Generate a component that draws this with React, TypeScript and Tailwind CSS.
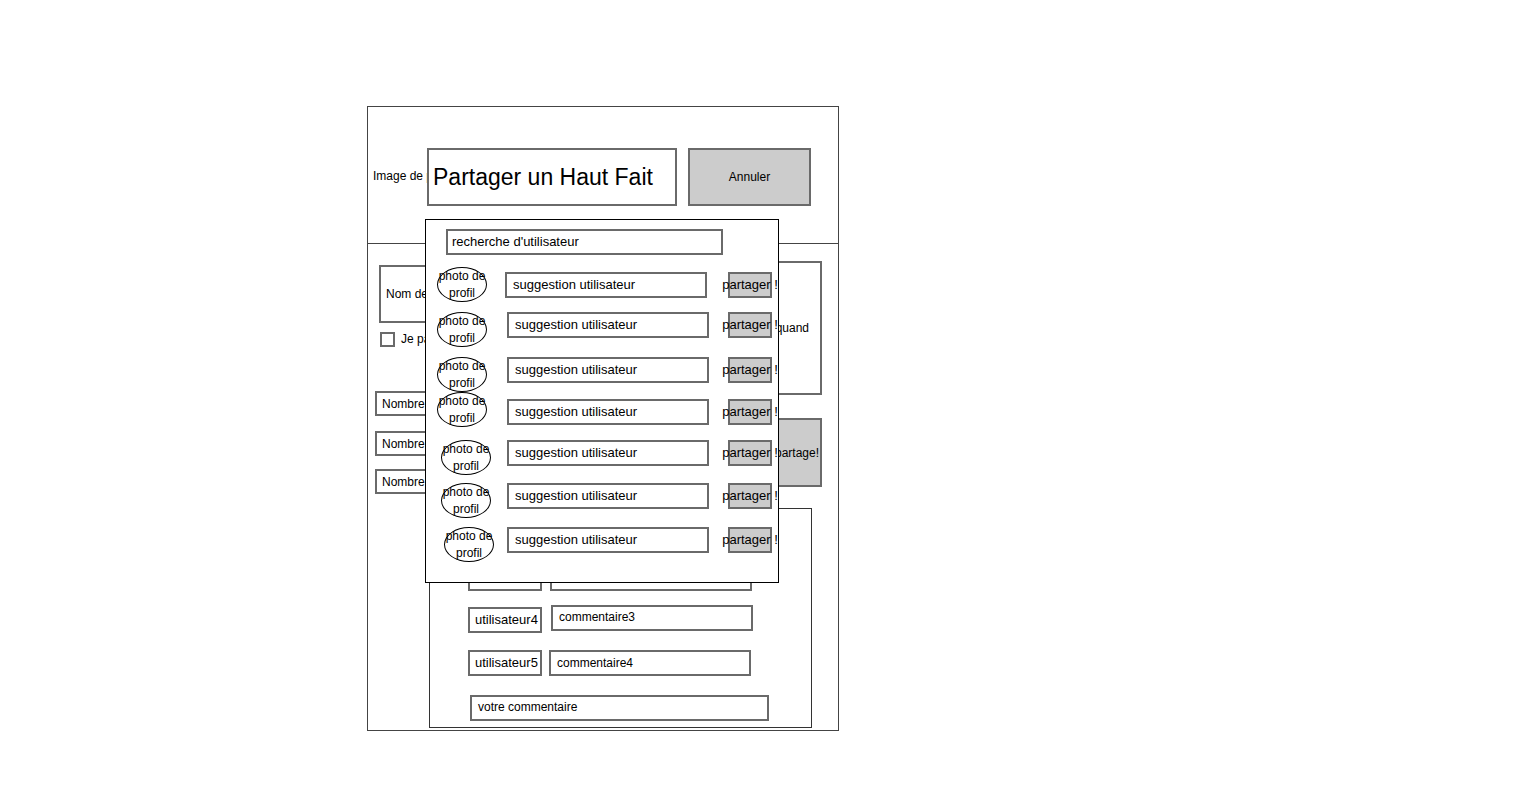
import React from "react";

const rows = [
  { gap: "mt-[12px]", c: "ml-[11px] mt-0", b: "ml-[18px] mt-[5px]", btn: "ml-[21px] mt-[5px]" },
  { gap: "mt-[10px]", c: "ml-[11px] mt-0", b: "ml-[20px] mt-0", btn: "ml-[19px] mt-0" },
  { gap: "mt-[10px]", c: "ml-[11px] mt-0", b: "ml-[20px] mt-0", btn: "ml-[19px] mt-0" },
  { gap: "mt-0", c: "ml-[11px] mt-0", b: "ml-[20px] mt-[7px]", btn: "ml-[19px] mt-[7px]" },
  { gap: "mt-[13px]", c: "ml-[15px] mt-0", b: "ml-[16px] mt-0", btn: "ml-[19px] mt-0" },
  { gap: "mt-[8px]", c: "ml-[15px] mt-0", b: "ml-[16px] mt-0", btn: "ml-[19px] mt-0" },
  { gap: "mt-[9px]", c: "ml-[18px] mt-0", b: "ml-[13px] mt-0", btn: "ml-[19px] mt-0" },
];

const box = "border-2 border-[#6a6a6a] bg-white flex items-center";

export default function App() {
  return (
    <div
      className="relative w-[1522px] h-[809px] bg-white overflow-hidden pt-[106px] pl-[367px] text-black"
      style={{ fontFamily: '"Liberation Sans", Arial, sans-serif' }}
    >
      {/* main frame */}
      <div className="w-[472px] h-[625px] border border-[#444] flex flex-col">
        {/* header */}
        <div className="h-[137px] shrink-0 border-b border-[#444] flex items-start pt-[41px]">
          <div className="w-[59px] h-[58px] pl-[5px] flex items-center overflow-hidden whitespace-nowrap text-[12px] -mt-[1px]">
            Image de profil
          </div>
          <div className={`${box} w-[250px] h-[58px] pl-[4px] text-[23px]`}>Partager un Haut Fait</div>
          <div className="ml-[11px] w-[123px] h-[58px] bg-[#cccccc] border-2 border-[#6a6a6a] flex items-center justify-center text-[12px]">
            Annuler
          </div>
        </div>

        {/* body */}
        <div className="flex flex-col">
          <div className="h-[264px] flex">
            <div className="pl-[11px] pt-[21px] flex flex-col">
              <div className={`${box} w-[160px] h-[58px] pl-[5px] text-[12px] whitespace-nowrap`}>Nom de l'utilisateur</div>
              <div className="mt-[7px] ml-[1px] flex items-center gap-[6px] text-[12px]">
                <div className="w-[15px] h-[15px] border-2 border-[#6a6a6a]" />
                <span>Je partage en privé</span>
              </div>
              <div className={`${box} -ml-[4px] mt-[43px] w-[160px] h-[25px] pl-[5px] text-[12px]`}>Nombre de likes</div>
              <div className={`${box} -ml-[4px] mt-[15px] w-[160px] h-[25px] pl-[5px] text-[12px]`}>Nombre de partages</div>
              <div className={`${box} -ml-[4px] mt-[13px] w-[160px] h-[25px] pl-[5px] text-[12px]`}>Nombre de vues</div>
            </div>
            <div className="ml-auto mr-[16px] pt-[17px] flex flex-col w-[200px]">
              <div className={`${box} h-[134px] justify-end pr-[11px] text-[12px] whitespace-nowrap`}>Notifier quand</div>
              <div className="mt-[23px] h-[69px] bg-[#cccccc] border-2 border-[#6a6a6a] flex items-center justify-end pr-[1px] text-[12px] whitespace-nowrap">
                Lancer le partage!
              </div>
            </div>
          </div>

          {/* comments */}
          <div className="ml-[61px] w-[383px] h-[220px] border border-[#333] pt-[13px] pl-[38px] flex flex-col">
            <div className="flex h-[26px]">
              <div className={`${box} w-[74px] pl-[5px] text-[13px] whitespace-nowrap`}>utilisateur2</div>
              <div className={`${box} ml-[8px] w-[202px] pl-[6px] text-[12px]`}>commentaire1</div>
            </div>
            <div className="flex h-[26px] mt-[17px]">
              <div className={`${box} w-[74px] pl-[5px] text-[13px] whitespace-nowrap`}>utilisateur3</div>
              <div className={`${box} ml-[8px] w-[202px] pl-[6px] text-[12px]`}>commentaire2</div>
            </div>
            <div className="flex items-start h-[28px] mt-[14px]">
              <div className={`${box} w-[74px] h-[26px] mt-[2px] pl-[5px] text-[13px] whitespace-nowrap overflow-visible`}>utilisateur4</div>
              <div className={`${box} ml-[9px] w-[202px] h-[26px] pl-[6px] pb-[3px] text-[12px]`}>commentaire3</div>
            </div>
            <div className="flex h-[26px] mt-[17px]">
              <div className={`${box} w-[74px] pl-[5px] text-[13px] whitespace-nowrap`}>utilisateur5</div>
              <div className={`${box} ml-[7px] w-[202px] pl-[6px] text-[12px]`}>commentaire4</div>
            </div>
            <div className={`${box} ml-[2px] mt-[19px] w-[299px] h-[26px] pl-[6px] pb-[2px] text-[12px]`}>votre commentaire</div>
          </div>
        </div>
      </div>

      {/* share popup */}
      <div className="absolute left-[425px] top-[219px] w-[354px] h-[364px] border border-black bg-white flex flex-col">
        <div className={`${box} ml-[20px] mt-[9px] w-[277px] h-[26px] pl-[4px] pb-[1px] text-[13px]`}>recherche d'utilisateur</div>
        {rows.map((r, i) => (
          <div key={i} className={`flex items-start ${r.gap}`}>
            <div
              className={`${r.c} w-[50px] h-[35px] rounded-[50%] border border-black flex flex-col items-center justify-center text-[12px] leading-[17px] whitespace-nowrap shrink-0`}
            >
              <span>photo de</span>
              <span>profil</span>
            </div>
            <div className={`${box} ${r.b} w-[202px] h-[26px] pl-[6px] pb-[1px] text-[13px] shrink-0`}>suggestion utilisateur</div>
            <div
              className={`${r.btn} w-[44px] h-[26px] bg-[#cccccc] border-2 border-[#6a6a6a] flex items-center justify-center text-[13px] whitespace-nowrap shrink-0`}
            >
              <span>partager !</span>
            </div>
          </div>
        ))}
      </div>
    </div>
  );
}
